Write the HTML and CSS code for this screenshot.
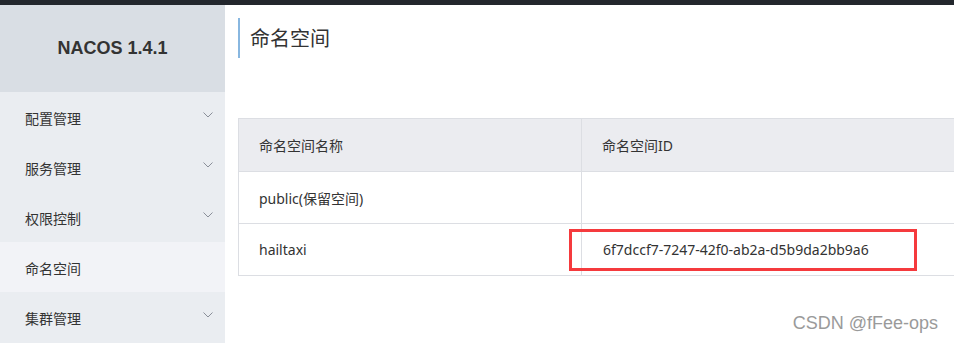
FILE: index.html
```html
<!DOCTYPE html>
<html lang="zh-CN">
<head>
<meta charset="utf-8">
<title>Nacos</title>
<link rel="stylesheet" href="styles.css">
</head>
<body>
<div class="topbar"></div>
<div class="layout">
  <aside class="sidebar">
    <div class="brand">NACOS 1.4.1</div>
    <ul class="menu">
      <li class="item"><span>配置管理</span><svg class="chev" width="10" height="6" viewBox="0 0 10 6"><polyline points="0.5,0.5 5,5 9.5,0.5" fill="none" stroke="#8a8f99" stroke-width="1"/></svg></li>
      <li class="item"><span>服务管理</span><svg class="chev" width="10" height="6" viewBox="0 0 10 6"><polyline points="0.5,0.5 5,5 9.5,0.5" fill="none" stroke="#8a8f99" stroke-width="1"/></svg></li>
      <li class="item"><span>权限控制</span><svg class="chev" width="10" height="6" viewBox="0 0 10 6"><polyline points="0.5,0.5 5,5 9.5,0.5" fill="none" stroke="#8a8f99" stroke-width="1"/></svg></li>
      <li class="item active"><span>命名空间</span></li>
      <li class="item"><span>集群管理</span><svg class="chev" width="10" height="6" viewBox="0 0 10 6"><polyline points="0.5,0.5 5,5 9.5,0.5" fill="none" stroke="#8a8f99" stroke-width="1"/></svg></li>
    </ul>
  </aside>
  <main class="main">
    <h1 class="title">命名空间</h1>
    <div class="tablewrap">
      <table class="grid">
        <thead>
          <tr><th class="c1">命名空间名称</th><th class="c2">命名空间ID</th></tr>
        </thead>
        <tbody>
          <tr><td>public(保留空间)</td><td></td></tr>
          <tr><td>hailtaxi</td><td><span class="idbox">6f7dccf7-7247-42f0-ab2a-d5b9da2bb9a6</span></td></tr>
        </tbody>
      </table>
    </div>
  </main>
</div>
<div class="watermark">CSDN @fFee-ops</div>
</body>
</html>
```
FILE: styles.css
```css
html, body {
  margin: 0;
  padding: 0;
}
body {
  width: 954px;
  height: 343px;
  overflow: hidden;
  background: #ffffff;
  font-family: "Noto Sans", "Noto Sans CJK SC", sans-serif;
  color: #333333;
  position: relative;
}
.topbar {
  height: 5px;
  background: #23272d;
}
.layout {
  display: flex;
  height: 338px;
}
.sidebar {
  width: 225px;
  flex: 0 0 225px;
  background: #eaedf1;
  display: flex;
  flex-direction: column;
}
.brand {
  height: 87px;
  background: #d9dee4;
  display: flex;
  align-items: center;
  justify-content: center;
  font-family: "Liberation Sans", "Noto Sans", sans-serif;
  font-weight: bold;
  font-size: 18px;
  color: #333;
}
.menu {
  list-style: none;
  margin: 0;
  padding: 0;
}
.item {
  height: 50px;
  box-sizing: border-box;
  padding: 2px 12px 0 25px;
  display: flex;
  align-items: center;
  justify-content: space-between;
  font-size: 14px;
  color: #333;
  font-family: "Noto Sans CJK SC", sans-serif;
}
.item span {
  line-height: 20px;
}
.item.active {
  background: #f2f3f7;
}
.chev {
  margin-top: -6px;
}
.main {
  flex: 1;
  padding-left: 13px;
  min-width: 0;
  overflow: hidden;
}
.title {
  margin: 13px 0 0 0;
  height: 40px;
  border-left: 2px solid #88b7e0;
  padding-left: 10px;
  font-size: 20px;
  font-weight: normal;
  line-height: 40px;
  color: #333;
  font-family: "Noto Sans CJK SC", sans-serif;
}
.tablewrap {
  margin-top: 60px;
  overflow: hidden;
}
.grid {
  border-collapse: collapse;
  width: 740px;
  font-size: 14px;
  table-layout: fixed;
}
.grid th, .grid td {
  border: 1px solid #dcdee3;
  text-align: left;
  padding: 0 20px;
  font-weight: normal;
  color: #333;
}
.grid th {
  background: #ebecf0;
  height: 52px;
}
.grid td {
  height: 51px;
}
.c1 {
  width: 302px;
}
.idbox {
  display: inline-block;
  margin-left: -33px;
  padding: 0 0 0 31px;
  width: 311px;
  height: 36px;
  line-height: 36px;
  border: 3px solid #f53a3d;
}
.watermark {
  position: absolute;
  right: 16px;
  bottom: 9px;
  font-family: "Liberation Sans", sans-serif;
  font-size: 18px;
  color: #9a9a9a;
}
```
